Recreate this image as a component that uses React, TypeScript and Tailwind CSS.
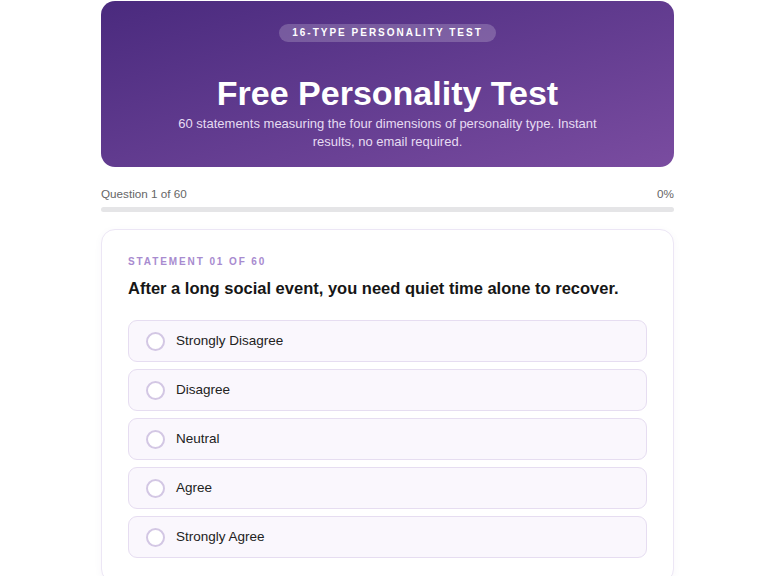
const options = ["Strongly Disagree", "Disagree", "Neutral", "Agree", "Strongly Agree"];

export default function App() {
  return (
    <div className="min-h-screen bg-white font-['Liberation_Sans',Arial,sans-serif]">
      <div className="ml-[101px] w-[573px] pt-px">
        {/* Hero */}
        <div className="rounded-[14px] bg-gradient-to-br from-[#4a2a7e] to-[#7a4ca0] px-6 pt-[23px] pb-[16px] text-center">
          <div className="flex justify-center">
            <span className="rounded-full bg-white/20 px-[13px] py-[2px] text-[10px] font-bold uppercase leading-[14px] tracking-[0.2em] text-white">
              16-Type Personality Test
            </span>
          </div>
          <h1 className="mt-[33px] text-[34px] font-bold leading-[36px] text-white">Free Personality Test</h1>
          <p className="mx-auto mt-[4px] max-w-[450px] text-[13px] leading-[18px] text-[#e6dcf2]">
            60 statements measuring the four dimensions of personality type. Instant results, no email required.
          </p>
        </div>

        {/* Progress */}
        <div className="mt-[20px] flex justify-between text-[11.7px] leading-[14px] text-[#666]">
          <span>Question 1 of 60</span>
          <span>0%</span>
        </div>
        <div className="mt-[6px] h-[5px] rounded-full bg-[#e5e5e7]">
          <div className="h-full w-0 rounded-full bg-[#6b3fa0]" />
        </div>

        {/* Question card */}
        <div className="mt-[17px] rounded-[14px] border border-[#ece6f5] bg-white px-[26px] pt-[24px] pb-6 shadow-[0_2px_8px_rgba(80,40,130,0.04)]">
          <div className="text-[10px] font-bold uppercase leading-[15px] tracking-[0.19em] text-[#a88bcf]">Statement 01 of 60</div>
          <h2 className="mt-[9px] text-[16.5px] font-bold leading-[20px] text-[#161616]">
            After a long social event, you need quiet time alone to recover.
          </h2>
          <div className="mt-[22px] flex flex-col gap-[7px]">
            {options.map((o) => (
              <button
                key={o}
                type="button"
                className="flex h-[42px] items-center gap-[11px] rounded-[9px] border border-[#e6ddf1] bg-[#faf7fd] px-[17px] text-left text-[13.5px] text-[#222]"
              >
                <span className="h-[19px] w-[19px] rounded-full border-2 border-[#d3c7e4] bg-white" />
                {o}
              </button>
            ))}
          </div>
        </div>
      </div>
    </div>
  );
}
